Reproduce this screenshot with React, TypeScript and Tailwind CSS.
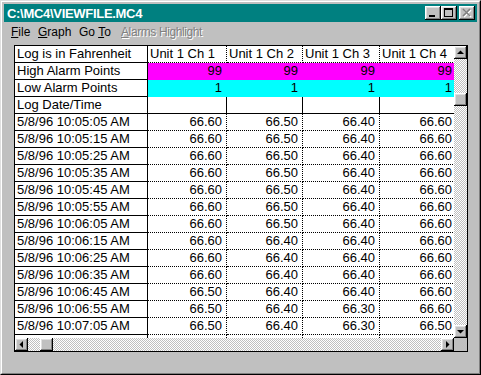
import React from "react";

const rows: string[][] = [
  ["5/8/96 10:05:05 AM", "66.60", "66.50", "66.40", "66.60"],
  ["5/8/96 10:05:15 AM", "66.60", "66.50", "66.40", "66.60"],
  ["5/8/96 10:05:25 AM", "66.60", "66.50", "66.40", "66.60"],
  ["5/8/96 10:05:35 AM", "66.60", "66.50", "66.40", "66.60"],
  ["5/8/96 10:05:45 AM", "66.60", "66.50", "66.40", "66.60"],
  ["5/8/96 10:05:55 AM", "66.60", "66.50", "66.40", "66.60"],
  ["5/8/96 10:06:05 AM", "66.60", "66.50", "66.40", "66.60"],
  ["5/8/96 10:06:15 AM", "66.60", "66.40", "66.40", "66.60"],
  ["5/8/96 10:06:25 AM", "66.60", "66.40", "66.40", "66.60"],
  ["5/8/96 10:06:35 AM", "66.60", "66.40", "66.40", "66.60"],
  ["5/8/96 10:06:45 AM", "66.50", "66.40", "66.40", "66.60"],
  ["5/8/96 10:06:55 AM", "66.50", "66.40", "66.30", "66.60"],
  ["5/8/96 10:07:05 AM", "66.50", "66.40", "66.30", "66.50"],
  ["5/8/96 10:07:15 AM", "66.50", "66.40", "66.30", "66.50"],
];

const colW = ["w-[79px]", "w-[76px]", "w-[77px]", "w-[77px]"];

const bevel =
  "bg-[#c0c0c0] shadow-[inset_-1px_-1px_0_#000,inset_1px_1px_0_#fff,inset_-2px_-2px_0_#808080,inset_2px_2px_0_#dfdfdf]";

const checker =
  "bg-[repeating-conic-gradient(#c0c0c0_0%_25%,#ffffff_0%_50%)] bg-[length:2px_2px]";

function Row({
  label,
  cells,
  bg,
  head,
  solid,
}: {
  label: string;
  cells: string[];
  bg?: string;
  head?: boolean;
  solid?: boolean;
}) {
  return (
    <div className="flex w-max">
      <div
        className={`w-[133px] h-[17px] shrink-0 pl-[2px] leading-[16px] whitespace-nowrap border-r border-b border-black ${
          solid ? "border-b-solid" : "border-b-dotted"
        } border-r-solid`}
      >
        {label}
      </div>
      {cells.map((c, i) => (
        <div
          key={i}
          className={`${colW[i]} h-[17px] shrink-0 leading-[16px] whitespace-nowrap border-r border-b ${
            head ? "pl-[2px] text-left" : "pr-[4px] text-right"
          } ${
            bg === "m"
              ? "bg-[#ff00ff] border-[#ff00ff]"
              : bg === "c"
                ? "bg-[#00ffff] border-[#00ffff]"
                : "bg-white border-black"
          } ${solid ? "border-b-solid border-r-dotted" : "border-dotted"}`}
        >
          {c}
        </div>
      ))}
    </div>
  );
}

function Arrow({ dir }: { dir: "up" | "down" | "left" | "right" }) {
  const pts = {
    up: "3,8 10,8 6.5,4.5",
    down: "3,5 10,5 6.5,8.5",
    left: "8,3 8,10 4.5,6.5",
    right: "5,3 5,10 8.5,6.5",
  }[dir];
  return (
    <div className={`w-[13px] h-[13px] shrink-0 ${bevel}`}>
      <svg width="13" height="13" viewBox="0 0 13 13">
        <polygon points={pts} fill="#000" />
      </svg>
    </div>
  );
}

function CaptionButton({ kind }: { kind: "min" | "max" | "close" }) {
  return (
    <div className={`w-[16px] h-[14px] ${bevel}`}>
      <svg width="16" height="14" viewBox="0 0 16 14" shapeRendering="crispEdges">
        {kind === "min" && <rect x="4" y="9" width="6" height="2" fill="#000" />}
        {kind === "max" && (
          <g fill="#000">
            <rect x="3" y="2" width="9" height="2" />
            <rect x="3" y="2" width="1" height="9" />
            <rect x="11" y="2" width="1" height="9" />
            <rect x="3" y="10" width="9" height="1" />
          </g>
        )}
        {kind === "close" && (
          <g strokeWidth="1.6" fill="none" shapeRendering="auto">
            <path d="M5 4 L12 11 M12 4 L5 11" stroke="#fff" />
            <path d="M4 3 L11 10 M11 3 L4 10" stroke="#808080" />
          </g>
        )}
      </svg>
    </div>
  );
}

export default function App() {
  return (
    <div className="w-[481px] h-[375px] font-['Liberation_Sans',Arial,sans-serif] text-black border border-t-[#dfdfdf] border-l-[#dfdfdf] border-r-black border-b-black">
      <div className="h-full border border-t-white border-l-white border-r-[#808080] border-b-[#808080] bg-[#c0c0c0] p-[2px]">
        {/* title bar */}
        <div className="h-[18px] bg-[#008080] flex items-center justify-between pl-[3px] pr-[2px]">
          <span className="text-white font-bold text-[13px] tracking-[-0.3px] leading-none">
            C:\MC4\VIEWFILE.MC4
          </span>
          <div className="flex items-center">
            <CaptionButton kind="min" />
            <CaptionButton kind="max" />
            <div className="w-[2px]" />
            <CaptionButton kind="close" />
          </div>
        </div>

        {/* menu */}
        <div className="h-[20px] flex items-center pl-[7px] text-[12px] leading-[20px]">
          <span className="w-[27px]">
            <span className="underline">F</span>ile
          </span>
          <span className="w-[41px]">
            <span className="underline">G</span>raph
          </span>
          <span className="w-[42px]">
            Go <span className="underline">T</span>o
          </span>
          <span className="text-[#808080] [text-shadow:1px_1px_0_#fff] tracking-[-0.4px]">
            <span className="underline">A</span>larms Highlight
          </span>
        </div>

        {/* grid */}
        <div className="mt-[3px] ml-[10px] w-[454px] border border-black bg-white text-[13px]">
          <div className="flex">
            <div className="w-[439px] h-[292px] overflow-hidden">
              <Row label="Log is in Fahrenheit" cells={["Unit 1 Ch 1", "Unit 1 Ch 2", "Unit 1 Ch 3", "Unit 1 Ch 4"]} head />
              <Row label="High Alarm Points" cells={["99", "99", "99", "99"]} bg="m" />
              <Row label="Low Alarm Points" cells={["1", "1", "1", "1"]} bg="c" />
              <Row label="Log Date/Time" cells={["", "", "", ""]} solid />
              {rows.map((r) => (
                <Row key={r[0]} label={r[0]} cells={r.slice(1)} />
              ))}
            </div>
            <div className={`w-[13px] h-[292px] flex flex-col ${checker}`}>
              <Arrow dir="up" />
              <div className="h-[34px]" />
              <div className={`w-[13px] h-[13px] ${bevel}`} />
              <div className="flex-1" />
              <Arrow dir="down" />
            </div>
          </div>
          <div className="flex">
            <div className={`w-[439px] h-[13px] flex ${checker}`}>
              <Arrow dir="left" />
              <div className="w-[12px]" />
              <div className={`w-[13px] h-[13px] ${bevel}`} />
              <div className="flex-1" />
              <Arrow dir="right" />
            </div>
            <div className="w-[13px] h-[13px] bg-[#c0c0c0]" />
          </div>
        </div>
      </div>
    </div>
  );
}
